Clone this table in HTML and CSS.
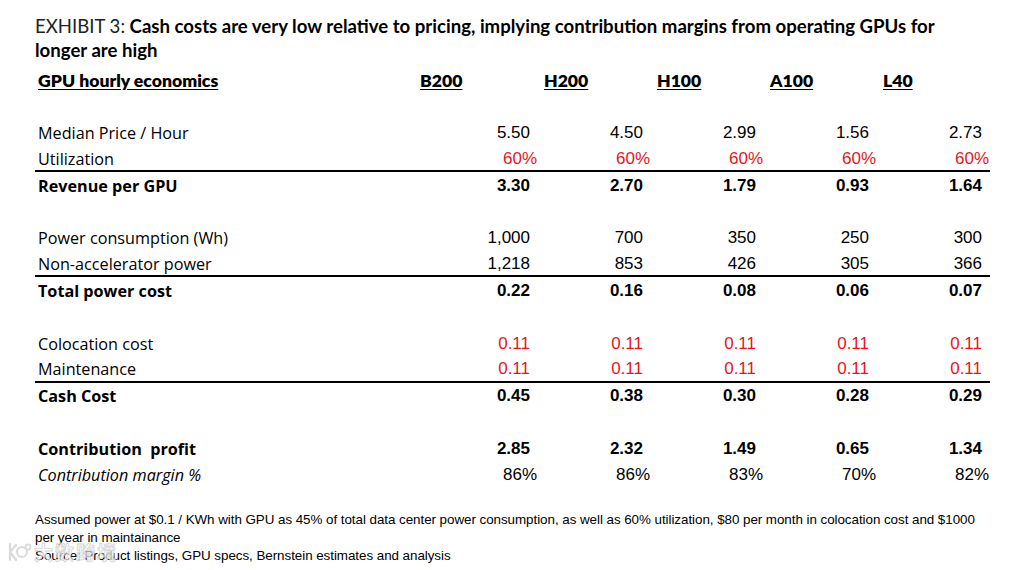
FILE: index.html
```html
<!DOCTYPE html>
<html>
<head>
<meta charset="utf-8">
<link rel="stylesheet" href="styles.css">
</head>
<body>
<div class="page">
  <h1 class="title"><span class="exhibit">EXHIBIT 3:</span> Cash costs are very low relative to pricing, implying contribution margins from operating GPUs for longer are high</h1>
  <div class="table">
    <div class="row head">
      <div class="label">GPU hourly economics</div>
      <div class="col first">B200</div>
      <div class="col">H200</div>
      <div class="col">H100</div>
      <div class="col">A100</div>
      <div class="col">L40</div>
    </div>
    <div class="row"></div>
    <div class="row">
      <div class="label">Median Price / Hour</div>
      <div class="num">5.50</div><div class="num">4.50</div><div class="num">2.99</div><div class="num">1.56</div><div class="num">2.73</div>
    </div>
    <div class="row rule">
      <div class="label">Utilization</div>
      <div class="num pct red">60%</div><div class="num pct red">60%</div><div class="num pct red">60%</div><div class="num pct red">60%</div><div class="num pct red">60%</div>
    </div>
    <div class="row bold">
      <div class="label">Revenue per GPU</div>
      <div class="num">3.30</div><div class="num">2.70</div><div class="num">1.79</div><div class="num">0.93</div><div class="num">1.64</div>
    </div>
    <div class="row"></div>
    <div class="row">
      <div class="label">Power consumption (Wh)</div>
      <div class="num">1,000</div><div class="num">700</div><div class="num">350</div><div class="num">250</div><div class="num">300</div>
    </div>
    <div class="row rule">
      <div class="label">Non-accelerator power</div>
      <div class="num">1,218</div><div class="num">853</div><div class="num">426</div><div class="num">305</div><div class="num">366</div>
    </div>
    <div class="row bold">
      <div class="label">Total power cost</div>
      <div class="num">0.22</div><div class="num">0.16</div><div class="num">0.08</div><div class="num">0.06</div><div class="num">0.07</div>
    </div>
    <div class="row"></div>
    <div class="row">
      <div class="label">Colocation cost</div>
      <div class="num red">0.11</div><div class="num red">0.11</div><div class="num red">0.11</div><div class="num red">0.11</div><div class="num red">0.11</div>
    </div>
    <div class="row rule">
      <div class="label">Maintenance</div>
      <div class="num red">0.11</div><div class="num red">0.11</div><div class="num red">0.11</div><div class="num red">0.11</div><div class="num red">0.11</div>
    </div>
    <div class="row bold">
      <div class="label">Cash Cost</div>
      <div class="num">0.45</div><div class="num">0.38</div><div class="num">0.30</div><div class="num">0.28</div><div class="num">0.29</div>
    </div>
    <div class="row"></div>
    <div class="row bold">
      <div class="label">Contribution&nbsp; profit</div>
      <div class="num">2.85</div><div class="num">2.32</div><div class="num">1.49</div><div class="num">0.65</div><div class="num">1.34</div>
    </div>
    <div class="row italic">
      <div class="label">Contribution margin %</div>
      <div class="num pct">86%</div><div class="num pct">86%</div><div class="num pct">83%</div><div class="num pct">70%</div><div class="num pct">82%</div>
    </div>
  </div>
  <div class="notes">
    <p>Assumed power at $0.1 / KWh with GPU as 45% of total data center power consumption, as well as 60% utilization, $80 per month in colocation cost and $1000 per year in maintainance</p>
    <p>Source: Product listings, GPU specs, Bernstein estimates and analysis</p>
  </div>
  <div class="watermark">
    <svg class="wm-logo" width="26" height="22" viewBox="0 0 26 22">
      <path d="M4 3 L4 19 M4 11 L10 4 M4 11 L10 19" fill="none" stroke="#d6d6d6" stroke-width="2.2" stroke-linecap="round"/>
      <circle cx="16" cy="11" r="5" fill="none" stroke="#d6d6d6" stroke-width="2"/>
      <circle cx="22" cy="6" r="2.6" fill="none" stroke="#d6d6d6" stroke-width="1.6"/>
    </svg>
    <span class="wm-text">大数跨境</span>
  </div>
</div>
</body>
</html>
```

FILE: styles.css
```css
html, body {
  margin: 0;
  padding: 0;
  background: #ffffff;
  color: #000000;
}

.page {
  position: relative;
  width: 1013px;
  height: 570px;
  padding: 14px 0 0 35px;
  box-sizing: border-box;
  overflow: hidden;
}

.title {
  margin: 0;
  width: 920px;
  font-family: Lato, "Open Sans", sans-serif;
  font-size: 18.6px;
  line-height: 24px;
  font-weight: 700;
  color: #000;
}

.exhibit {
  font-weight: 400;
  color: #222;
}

.table {
  margin-top: 5px;
  width: 955px;
}

.row {
  display: grid;
  grid-template-columns: 389px repeat(5, 113px);
  height: 26.3px;
  box-sizing: border-box;
  align-items: center;
  padding-top: 1px;
}

.row.rule {
  border-bottom: 2px solid #000;
}

.label {
  padding-left: 3px;
  font-family: "Open Sans", "Noto Sans", sans-serif;
  font-size: 16.2px;
  white-space: nowrap;
}

.num {
  text-align: right;
  padding-right: 7px;
  font-family: "Liberation Sans", Arial, sans-serif;
  font-size: 17px;
}

.num.pct {
  padding-right: 0;
}

.red {
  color: #e8141c;
}

.bold .label,
.bold .num {
  font-weight: 700;
}

.italic .label {
  font-style: italic;
}

.head .label,
.head .col {
  font-family: Lato, "Open Sans", sans-serif;
  font-weight: 800;
  font-size: 17.6px;
  text-decoration: underline;
  text-underline-offset: 2px;
}

.head .col {
  padding-left: 7px;
}

.head .col.first {
  padding-left: 0;
  margin-left: -4px;
}

.notes {
  margin-top: 23px;
  width: 955px;
  font-family: "Liberation Sans", Arial, sans-serif;
  font-size: 13.4px;
  line-height: 18px;
  letter-spacing: -0.05px;
  color: #000;
}

.notes p {
  margin: 0;
}

.watermark {
  position: absolute;
  left: 6px;
  top: 538px;
  display: flex;
  align-items: center;
  gap: 2px;
  opacity: 0.9;
  pointer-events: none;
}

.wm-text {
  font-family: "Noto Sans CJK SC", sans-serif;
  font-size: 19px;
  font-weight: 700;
  color: rgba(255, 255, 255, 0.75);
  -webkit-text-stroke: 0.8px #d0d0d0;
  letter-spacing: 2px;
}
```
